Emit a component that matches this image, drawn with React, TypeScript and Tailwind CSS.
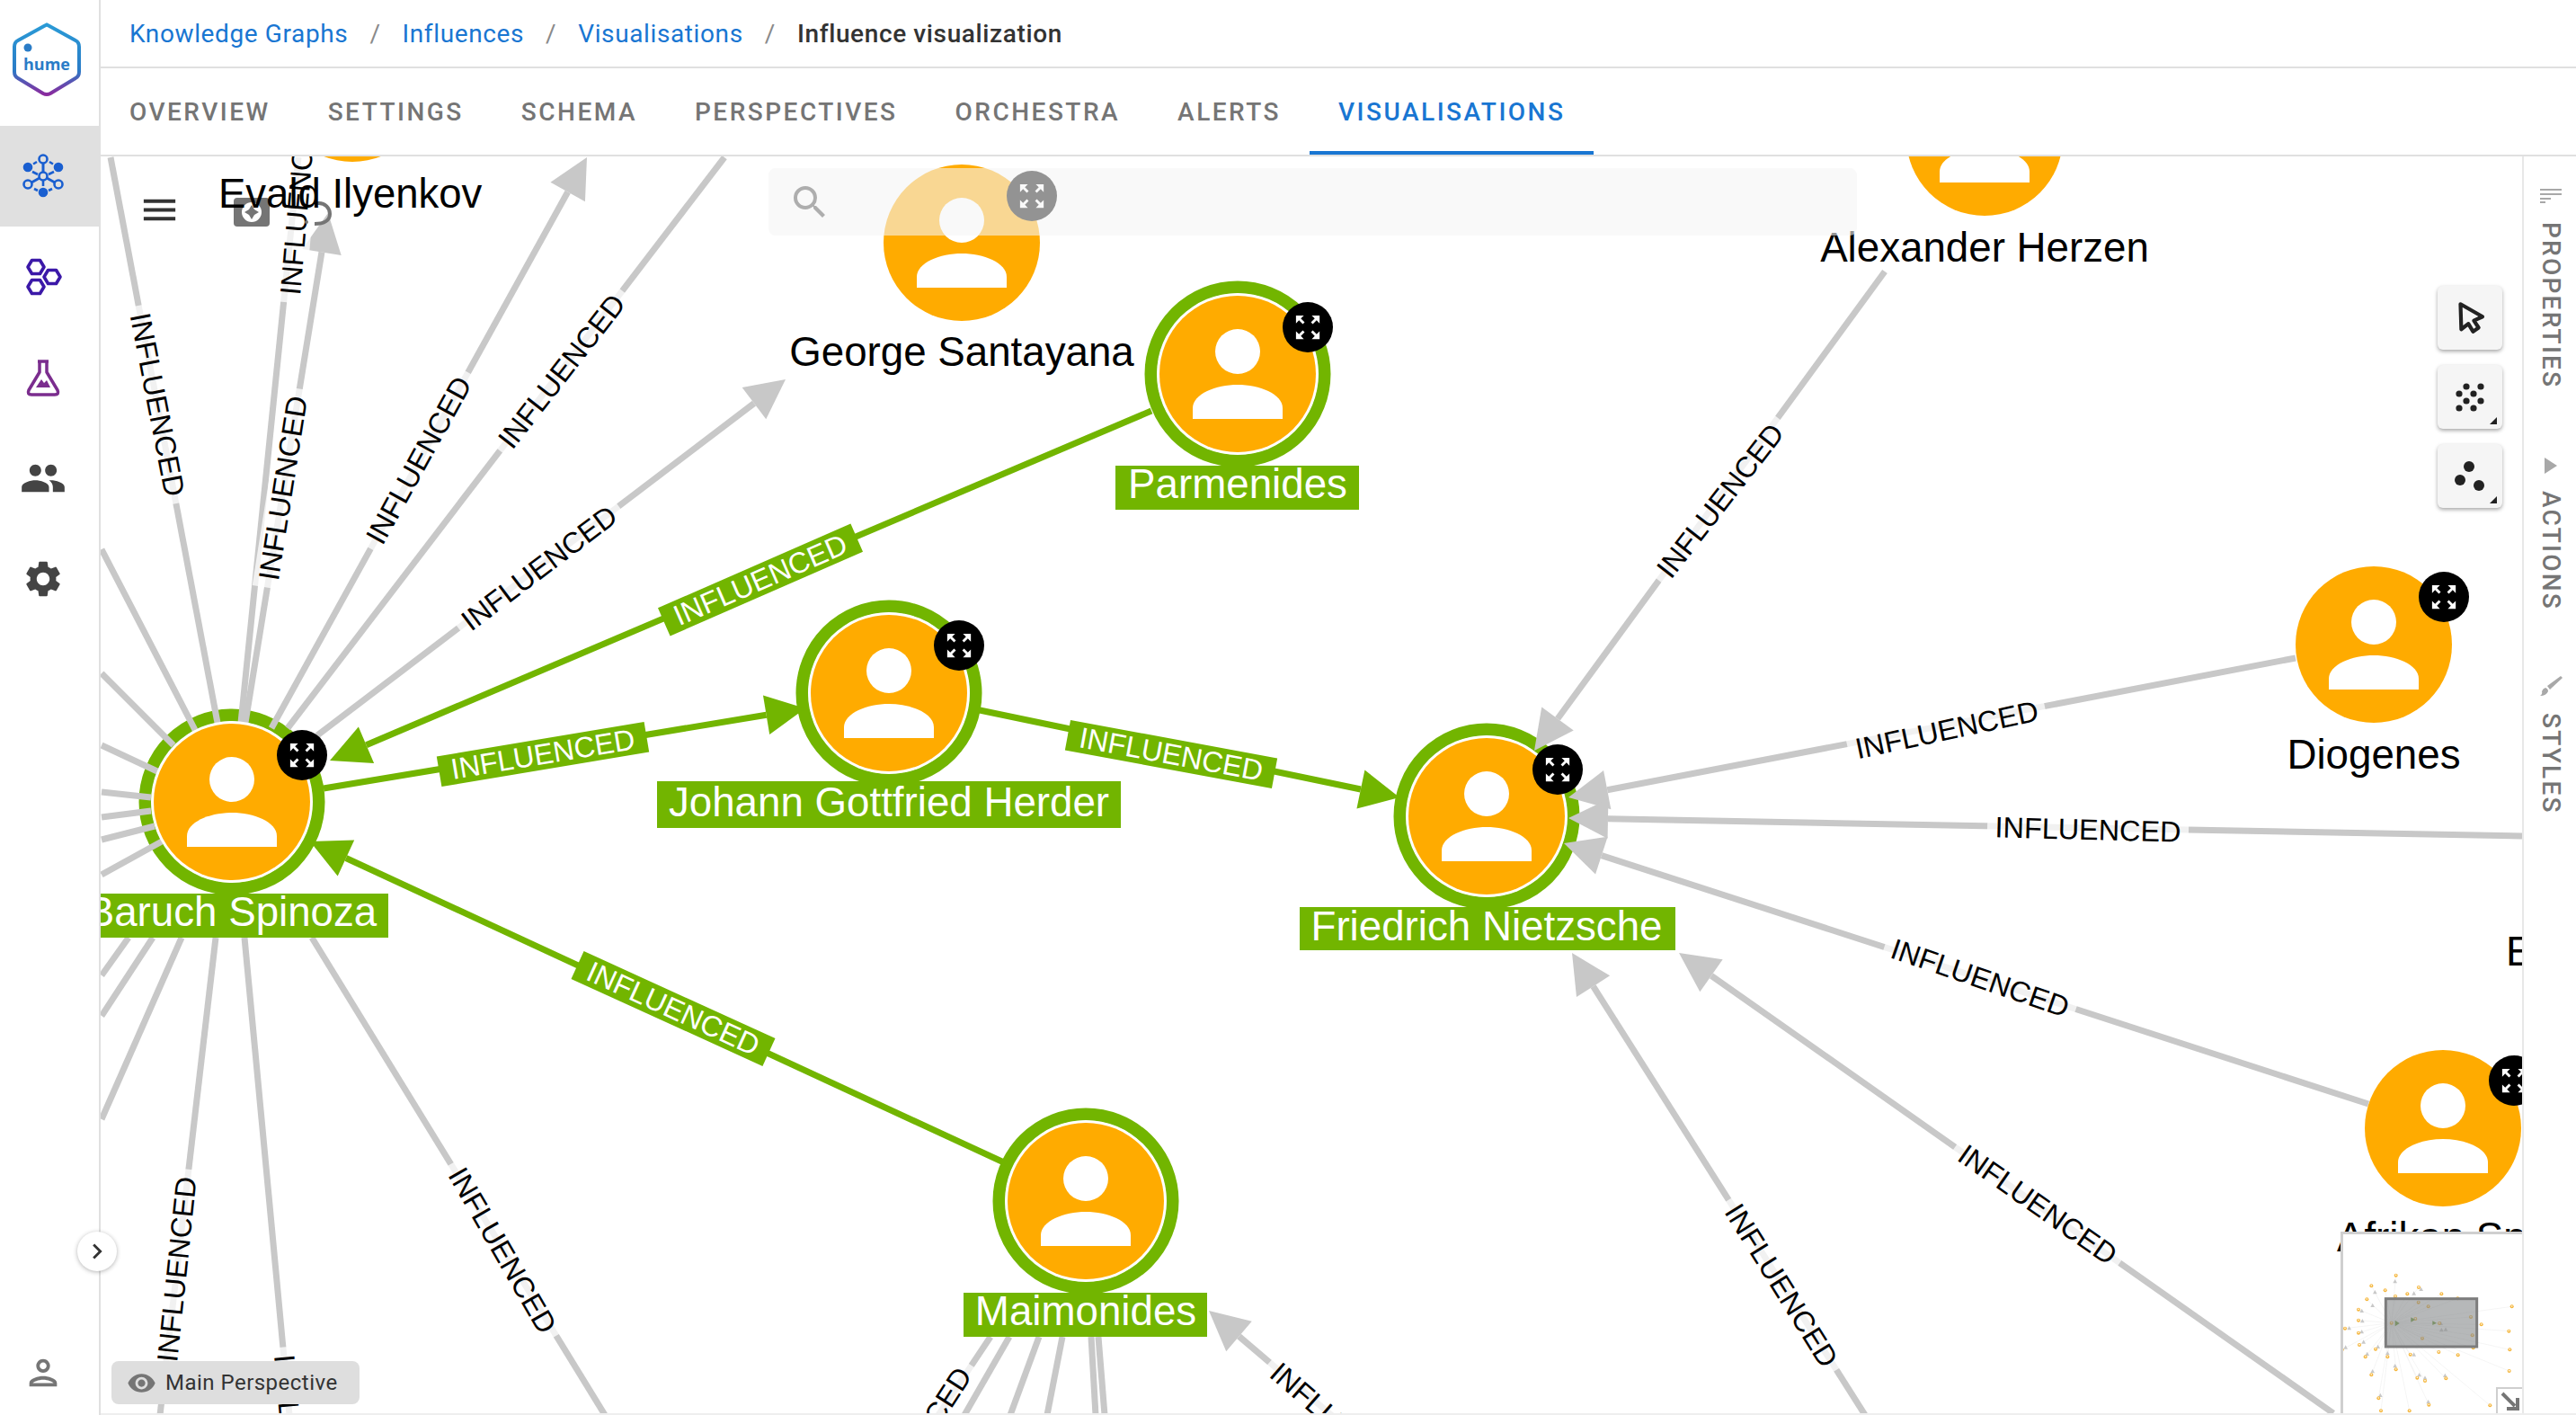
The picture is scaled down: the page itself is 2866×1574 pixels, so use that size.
import { MdChevronRight, MdMenu, MdOutlinePerson, MdPeople, MdSearch, MdSettings, MdVisibility } from 'react-icons/md';

const GRAY = '#c8c8c8';
const GREEN = '#72b500';
const ORANGE = '#ffab00';
const EXPAND =
    'M15 3l2.3 2.3-2.89 2.87 1.42 1.42L18.7 6.7 21 9V3h-6zM3 9l2.3-2.3 2.87 2.89 1.42-1.42L6.7 5.3 9 3H3v6zm6 12l-2.3-2.3 2.89-2.87-1.42-1.42L5.3 17.3 3 15v6h6zm12-6l-2.3 2.3-2.87-2.89-1.42 1.42 2.89 2.87L15 21h6v-6z';

type Line = [number, number, number, number];

// plain spokes, no arrow head
const spokes: Line[] = [
    [123, 175, 242, 804],
    [332, 175, 268, 804],
    [320, 810, 806, 175],
    [113, 611, 217, 812],
    [113, 749, 193, 829],
    [113, 829, 175, 858],
    [113, 881, 168, 887],
    [113, 909, 168, 902],
    [113, 934, 172, 919],
    [113, 973, 180, 936],
    [143, 1043, 113, 1085],
    [170, 1043, 113, 1130],
    [202, 1043, 113, 1245],
    [240, 1043, 178, 1574],
    [272, 1043, 322, 1574],
    [347, 1043, 673, 1574],
    [1102, 1487, 1000, 1640],
    [1123, 1487, 1073, 1574],
    [1156, 1487, 1124, 1574],
    [1182, 1487, 1165, 1574],
    [1214, 1487, 1219, 1574],
    [1222, 1487, 1229, 1574],
];

// last point is the tip of the arrow
const arrows: Line[] = [
    [273, 804, 365, 237],
    [302, 810, 653, 175],
    [353, 818, 874, 422],
    [2097, 302, 1707, 835],
    [2554, 732, 1745, 887],
    [2806, 930, 1745, 910],
    [2635, 1228, 1740, 938],
    [2596, 1572, 1868, 1060],
    [2075, 1574, 1749, 1060],
    [1500, 1590, 1345, 1458],
];

const greenArrows: Line[] = [
    [1281, 457, 367, 846],
    [360, 877, 896, 788],
    [1090, 790, 1557, 887],
    [1119, 1294, 345, 936],
];

const edgeLabels = [
    [175, 450, 79],
    [315, 543, -81],
    [332, 225, -85],
    [466, 512, -61],
    [625, 413, -52],
    [600, 632, -37],
    [197, 1412, -84],
    [325, 1610, 85],
    [559, 1391, 60],
    [1017, 1611, -57],
    [1496, 1590, 41],
    [1914, 557, -52],
    [2166, 812, -12],
    [2323, 923, 1.5],
    [2203, 1088, 19],
    [2267, 1340, 35],
    [1982, 1430, 58],
];

const greenLabels = [
    [846, 645, -23.6],
    [604, 839, -9.5],
    [1303, 839, 10.5],
    [749, 1122, 24.5],
];

type GraphNode = {
    x: number;
    y: number;
    name: string;
    picked?: boolean;
    badge?: [number, number];
    labelY?: number;
    box?: [number, number, number, number];
};

const nodes: GraphNode[] = [
    { x: 392, y: 93, name: '' },
    { x: 1070, y: 270, name: 'George Santayana', badge: [1148, 218], labelY: 407 },
    { x: 2208, y: 153, name: 'Alexander Herzen', labelY: 291 },
    { x: 2641, y: 717, name: 'Diogenes', badge: [2719, 664], labelY: 855 },
    { x: 2718, y: 1255, name: 'Afrikan Spir', badge: [2797, 1202], labelY: 1392 },
    { x: 258, y: 892, name: 'Baruch Spinoza', picked: true, badge: [336, 840], labelY: 1030, box: [111, 994, 321, 49] },
    { x: 1377, y: 416, name: 'Parmenides', picked: true, badge: [1455, 364], labelY: 554, box: [1241, 518, 271, 49] },
    { x: 989, y: 771, name: 'Johann Gottfried Herder', picked: true, badge: [1067, 718], labelY: 908, box: [731, 869, 516, 52] },
    { x: 1654, y: 908, name: 'Friedrich Nietzsche', picked: true, badge: [1733, 856], labelY: 1046, box: [1446, 1009, 418, 48] },
    { x: 1208, y: 1336, name: 'Maimonides', picked: true, labelY: 1474, box: [1072, 1438, 271, 49] },
];

const miniDots = [
    [500, 808], [418, 843], [464, 858], [403, 888], [375, 922], [375, 958], [330, 985], [375, 1000], [320, 1056],
    [378, 1040], [398, 1080], [432, 1054], [472, 1080], [418, 1140], [500, 1122], [442, 1218], [450, 1260], [545, 1260],
    [610, 1240], [571, 1150], [597, 1160], [667, 1152], [548, 1072], [643, 1064], [707, 1074], [758, 1050], [785, 972],
    [887, 912], [877, 994], [880, 1056], [878, 1127], [814, 1242], [652, 870], [576, 848], [538, 870], [498, 878],
    [706, 885], [575, 898], [608, 912], [750, 947], [565, 953], [485, 967], [645, 968], [755, 1008], [588, 1018],
];

const miniArrows = [
    [497, 828], [430, 864], [422, 908], [386, 926], [388, 960], [344, 984], [386, 996], [332, 1048], [392, 1030],
    [404, 1070], [440, 1046], [472, 1068], [422, 1128], [497, 1110], [448, 1208], [608, 1230], [578, 1140], [597, 1150],
    [664, 1142], [560, 1072], [584, 854], [560, 868], [650, 968], [652, 990], [666, 988],
];

function Arrow({ line, color }: { line: Line; color: string }) {
    const [x1, y1, x2, y2] = line;
    const len = Math.hypot(x2 - x1, y2 - y1);
    const ux = (x2 - x1) / len;
    const uy = (y2 - y1) / len;
    const bx = x2 - ux * 44;
    const by = y2 - uy * 44;
    const points = `${x2},${y2} ${bx - uy * 22},${by + ux * 22} ${bx + uy * 22},${by - ux * 22}`;
    return (
        <g>
            <line x1={x1} y1={y1} x2={bx} y2={by} stroke={color} strokeWidth={7} />
            <polygon points={points} fill={color} />
        </g>
    );
}

function EdgeLabel({ x, y, r, picked }: { x: number; y: number; r: number; picked?: boolean }) {
    return (
        <g transform={`translate(${x} ${y}) rotate(${r})`}>
            {picked ? (
                <rect x={-117} y={-17} width={234} height={34} fill={GREEN} />
            ) : (
                <rect x={-112} y={-17} width={224} height={34} fill="#fff" fillOpacity={0.75} />
            )}
            <text textAnchor="middle" dominantBaseline="central" fontSize={32.4} fill={picked ? '#fff' : '#000'}>
                INFLUENCED
            </text>
        </g>
    );
}

function Badge({ x, y }: { x: number; y: number }) {
    return (
        <g>
            <circle cx={x} cy={y} r={28} fill="#000" />
            <path d={EXPAND} fill="#fff" transform={`translate(${x - 17.5} ${y - 17.5}) scale(1.46)`} />
        </g>
    );
}

function PersonNode({ node }: { node: GraphNode }) {
    const { x, y } = node;
    return (
        <g>
            {node.picked && <circle cx={x} cy={y} r={90} fill="#fff" />}
            <circle cx={x} cy={y} r={87} fill={ORANGE} />
            <circle cx={x} cy={y - 25} r={25} fill="#fff" />
            <path
                d={`M${x - 50} ${y + 50} V${y + 38} C${x - 50} ${y + 22} ${x - 24} ${y + 12} ${x} ${y + 12} C${x + 24} ${y + 12} ${x + 50} ${y + 22} ${x + 50} ${y + 38} V${y + 50} Z`}
                fill="#fff"
            />
            {node.badge && <Badge x={node.badge[0]} y={node.badge[1]} />}
        </g>
    );
}

function Graph() {
    return (
        <svg
            className="absolute top-0 left-0 font-['Liberation_Sans',sans-serif]"
            width={2694}
            height={1398}
            viewBox="112 174 2694 1398"
        >
            {nodes
                .filter((n) => n.picked)
                .map((n) => (
                    <circle key={n.name} cx={n.x} cy={n.y} r={96.5} fill="none" stroke={GREEN} strokeWidth={14} />
                ))}
            {spokes.map((l, i) => (
                <line key={i} x1={l[0]} y1={l[1]} x2={l[2]} y2={l[3]} stroke={GRAY} strokeWidth={7} />
            ))}
            {arrows.map((l, i) => (
                <Arrow key={i} line={l} color={GRAY} />
            ))}
            {greenArrows.map((l, i) => (
                <Arrow key={i} line={l} color={GREEN} />
            ))}
            {nodes.map((n, i) => (
                <PersonNode key={i} node={n} />
            ))}
            {edgeLabels.map((l, i) => (
                <EdgeLabel key={i} x={l[0]} y={l[1]} r={l[2]} />
            ))}
            {greenLabels.map((l, i) => (
                <EdgeLabel key={i} x={l[0]} y={l[1]} r={l[2]} picked />
            ))}
            {nodes.map((n, i) =>
                n.box ? <rect key={i} x={n.box[0]} y={n.box[1]} width={n.box[2]} height={n.box[3]} fill={GREEN} /> : null,
            )}
            {nodes.map((n, i) =>
                n.name ? (
                    <text key={i} x={n.x} y={n.labelY} textAnchor="middle" fontSize={45.7} fill={n.picked ? '#fff' : '#000'}>
                        {n.name}
                    </text>
                ) : null,
            )}
            <text x={2788} y={1074} fontSize={45.7} fill="#000">
                E
            </text>

            {/* half hidden controls under the node name */}
            <rect x={260} y={220} width={40} height={32} rx={4} fill="#757575" />
            <circle cx={280} cy={236} r={11} fill="#fff" />
            <path d="M280 228 L283 233 L288 236 L283 239 L280 244 L277 239 L272 236 L277 233 Z" fill="#757575" />
            <path d="M353 226 C362 225 367 232 367 238 C367 245 361 249 350 249" fill="none" stroke="#757575" strokeWidth={4} />
            <circle cx={341} cy={247} r={2} fill="#757575" />
            <text x={243} y={231} fontSize={45.5} fill="#000">
                Evald Ilyenkov
            </text>
        </svg>
    );
}

function Minimap() {
    return (
        <div className="absolute right-0 bottom-0 h-[202px] w-[202px] overflow-hidden border-t-[3px] border-l-[3px] border-[#cfcfcf] bg-white">
            <svg className="h-full w-full" viewBox="324 671 597 597">
                {miniDots.map((d, i) => (
                    <line key={i} x1={485} y1={967} x2={d[0]} y2={d[1]} stroke="#f0f0f0" strokeWidth={2} />
                ))}
                {miniArrows.map((d, i) => (
                    <polygon key={i} points={`${d[0]},${d[1] - 7} ${d[0] + 7},${d[1] + 6} ${d[0] - 7},${d[1] + 6}`} fill="#c8c8c8" />
                ))}
                {miniDots.map((d, i) => (
                    <g key={i}>
                        <circle cx={d[0]} cy={d[1]} r={6} fill="#f5b63c" />
                        <circle cx={d[0]} cy={d[1] - 1} r={2.5} fill="#fff" />
                    </g>
                ))}
                <polygon points="497,958 497,978 512,968" fill="#6f9e3a" />
                <polygon points="550,948 550,964 564,956" fill="#6f9e3a" />
                <polygon points="622,960 622,974 636,967" fill="#6f9e3a" />
                <rect x={466} y={886} width={304} height={160} fill="#85888b" fillOpacity={0.6} stroke="#7d7d7d" strokeWidth={9} />
            </svg>
            <div className="absolute right-0 bottom-0 flex h-[29px] w-[29px] items-center justify-center border-t-2 border-l-2 border-[#cfcfcf] bg-white">
                <svg width="24" height="24" viewBox="0 0 24 24">
                    <path d="M3 3 L17 17 M20 8 V20 H8" fill="none" stroke="#757575" strokeWidth={4} />
                </svg>
            </div>
        </div>
    );
}

function ToolButton({ children, corner }: { children: React.ReactNode; corner?: boolean }) {
    return (
        <div className="relative flex h-[71px] w-[72px] items-center justify-center rounded-md bg-[#f5f5f5] shadow-[0_2px_4px_rgba(0,0,0,0.35)]">
            {children}
            {corner && (
                <svg className="absolute right-[6px] bottom-[5px]" width="8" height="8" viewBox="0 0 8 8">
                    <polygon points="8,0 8,8 0,8" fill="#222" />
                </svg>
            )}
        </div>
    );
}

function Canvas() {
    return (
        <div className="relative min-w-0 flex-1 overflow-hidden bg-white">
            <Graph />
            <MdMenu className="absolute top-[36px] left-[42px] text-[#333]" size={47} />
            <div className="absolute top-[13px] left-[743px] flex h-[75px] w-[1211px] items-center rounded-lg bg-[rgba(245,245,245,0.6)] pl-[22px]">
                <MdSearch className="text-[#aeaeae]" size={48} />
            </div>
            <div className="absolute top-[144px] right-[22px] flex flex-col gap-[17px]">
                <ToolButton>
                    <svg width="42" height="42" viewBox="0 0 24 24">
                        <path d="M6 3 L20 11 L14.5 13.5 L17.5 18 L14 20.5 L11 15.5 L6.5 19 Z" fill="none" stroke="#222" strokeWidth={2.4} strokeLinejoin="round" />
                    </svg>
                </ToolButton>
                <ToolButton corner>
                    <svg width="32" height="32" viewBox="-4 -4 32 32" fill="#222">
                        <circle cx="0" cy="8" r="3.6" />
                        <circle cx="8" cy="0" r="3.6" />
                        <circle cx="24" cy="0" r="3.6" />
                        <circle cx="16" cy="8" r="3.6" />
                        <circle cx="0" cy="24" r="3.6" />
                        <circle cx="8" cy="16" r="3.6" />
                        <circle cx="24" cy="16" r="3.6" />
                        <circle cx="16" cy="24" r="3.6" />
                    </svg>
                </ToolButton>
                <ToolButton corner>
                    <svg width="34" height="34" viewBox="0 0 34 34" fill="#222">
                        <circle cx="16" cy="6" r="6" />
                        <circle cx="6" cy="21" r="6" />
                        <circle cx="27" cy="27" r="6" />
                    </svg>
                </ToolButton>
            </div>
            <div className="absolute top-[1340px] left-[12px] flex h-[48px] w-[276px] items-center gap-[10px] rounded-lg bg-[#dedede] pl-[17px] text-[24px] tracking-[0.02em] text-[#333]">
                <MdVisibility className="text-[#757575]" size={33} />
                <span>Main Perspective</span>
            </div>
            <Minimap />
        </div>
    );
}

function Logo() {
    return (
        <svg width="112" height="140" viewBox="0 0 112 140">
            <defs>
                <linearGradient id="hume" x1="0" y1="0" x2="0" y2="1">
                    <stop offset="0" stopColor="#2a9ad6" />
                    <stop offset="0.65" stopColor="#2a7cc7" />
                    <stop offset="1" stopColor="#8a2a9e" />
                </linearGradient>
            </defs>
            <path
                d="M52 27.5 Q52 27.5 49 29 L20 45 Q16 47 16 52 V80 Q16 85 20 87 L48 104 Q52 106 56 104 L84 87 Q88 85 88 80 V52 Q88 47 84 45 L55 29 Q52 27.5 52 27.5 Z"
                fill="none"
                stroke="url(#hume)"
                strokeWidth={4}
            />
            <circle cx="31" cy="53" r="4.5" fill="#2a7cc7" />
            <text x="52" y="78" textAnchor="middle" fontSize="18" fontWeight="700" fill="#2a7cc7" fontFamily="Open Sans, sans-serif">
                hume
            </text>
        </svg>
    );
}

function GraphIcon() {
    return (
        <svg width="50" height="56" viewBox="23 169 50 56" fill="none" stroke="#1a5fd0" strokeWidth={2.6}>
            <path d="M48 192 V183 M44 199 L35 204 M52 199 L61 204" strokeWidth={3} />
            <path d="M41 181 L37 183.5 M55 181 L59 183.5 M36 192 L42 195 M60 192 L54 195 M48 202 V208 M38 211 L42 213 M58 211 L54 213" strokeWidth={2.6} />
            <circle cx="48" cy="197" r="4.5" />
            <circle cx="48" cy="178" r="4.5" />
            <circle cx="31" cy="206" r="4.5" />
            <circle cx="65" cy="206" r="4.5" />
            <circle cx="31" cy="187" r="4" fill="#1a5fd0" />
            <circle cx="65" cy="187" r="4" fill="#1a5fd0" />
            <circle cx="48" cy="215" r="4" fill="#1a5fd0" />
        </svg>
    );
}

function HexIcon() {
    const hex = (x: number, y: number) => `${x - 9},${y} ${x - 4.5},${y - 7.5} ${x + 4.5},${y - 7.5} ${x + 9},${y} ${x + 4.5},${y + 7.5} ${x - 4.5},${y + 7.5}`;
    return (
        <svg width="44" height="48" viewBox="27 284 44 48" fill="none" stroke="#3b18a8" strokeWidth={3.6} strokeLinejoin="round">
            <polygon points={hex(40, 297)} />
            <polygon points={hex(58, 308)} />
            <polygon points={hex(40, 319)} />
        </svg>
    );
}

function FlaskIcon() {
    return (
        <svg width="40" height="44" viewBox="0 0 40 44" fill="none" stroke="#7b2d8e" strokeWidth={3.5} strokeLinejoin="round">
            <path d="M14 4 H26 M16 4 V16 L4 36 Q2 41 7 41 H33 Q38 41 36 36 L24 16 V4" />
            <path d="M12 33 L18 24 L21 28 L24 25 L28 33 Z" fill="#7b2d8e" stroke="none" />
        </svg>
    );
}

function Sidebar() {
    return (
        <aside className="flex h-full w-[112px] shrink-0 flex-col border-r-2 border-[#e0e0e0] bg-white">
            <Logo />
            <div className="flex h-[112px] items-center bg-[#e0e0e0] pl-[23px]">
                <GraphIcon />
            </div>
            <div className="flex h-[112px] items-center pl-[27px]">
                <HexIcon />
            </div>
            <div className="flex h-[112px] items-center pl-[28px]">
                <FlaskIcon />
            </div>
            <div className="flex h-[112px] items-center pl-[22px]">
                <MdPeople className="text-[#444]" size={52} />
            </div>
            <div className="flex h-[112px] items-center pl-[24px]">
                <MdSettings className="text-[#444]" size={48} />
            </div>
            <div className="mt-auto flex h-[94px] items-center pl-[25px]">
                <MdOutlinePerson className="text-[#757575]" size={46} />
            </div>
        </aside>
    );
}

function Breadcrumbs() {
    const links = ['Knowledge Graphs', 'Influences', 'Visualisations'];
    return (
        <div className="flex h-[76px] items-center border-b-2 border-[#e0e0e0] pt-[2px] pl-8 text-[28px] tracking-[0.022em]">
            {links.map((link) => (
                <div key={link} className="flex items-center">
                    <span className="text-[#1976d2]">{link}</span>
                    <span className="mx-[24px] text-[#8a8a8a]">/</span>
                </div>
            ))}
            <span className="font-medium text-[#333]">Influence visualization</span>
        </div>
    );
}

function Tabs() {
    const tabs = ['Overview', 'Settings', 'Schema', 'Perspectives', 'Orchestra', 'Alerts'];
    return (
        <div className="flex h-[98px] border-b-2 border-[#e0e0e0] text-[28px] font-medium tracking-[0.089em] uppercase">
            {tabs.map((tab) => (
                <div key={tab} className="flex items-center px-8 pt-[2px] text-[#757575]">
                    {tab}
                </div>
            ))}
            <div className="flex items-center border-b-4 border-[#1976d2] px-8 pt-[6px] text-[#1976d2]">Visualisations</div>
        </div>
    );
}

function RightRail() {
    return (
        <aside className="flex w-[60px] shrink-0 flex-col items-center border-l-2 border-[#e8e8e8] bg-white pt-9 pl-[2px] text-[28px] font-medium tracking-[0.08em] text-[#757575]">
            <svg width="24" height="16" viewBox="0 0 24 16" stroke="#a8a8a8" strokeWidth={2}>
                <path d="M0 1 H24 M0 6 H24 M0 11 H12 M0 15 H6" />
            </svg>
            <span className="mt-[21px] leading-none [writing-mode:vertical-rl]">PROPERTIES</span>
            <svg className="mt-[77px]" width="14" height="18" viewBox="0 0 14 18" fill="#a8a8a8">
                <polygon points="0,0 14,9 0,18" />
            </svg>
            <span className="mt-[19px] leading-none [writing-mode:vertical-rl]">ACTIONS</span>
            <svg className="mt-[72px]" width="26" height="24" viewBox="0 0 26 24" fill="#a8a8a8">
                <path d="M24 1 L9 12 L12 16 L26 3 Z" />
                <path d="M7 14 Q10 15 10 18 Q8 23 1 23 Q4 21 3 18 Q4 15 7 14 Z" />
            </svg>
            <span className="mt-[18px] leading-none [writing-mode:vertical-rl]">STYLES</span>
        </aside>
    );
}

export default function App() {
    return (
        <div className="relative flex h-[1574px] w-[2866px] overflow-hidden bg-white font-['Roboto',sans-serif]">
            <Sidebar />
            <main className="flex h-full min-w-0 flex-1 flex-col">
                <Breadcrumbs />
                <Tabs />
                <div className="flex min-h-0 flex-1 border-b-2 border-[#eeeeee]">
                    <Canvas />
                    <RightRail />
                </div>
            </main>
            <button className="absolute top-[1370px] left-[86px] flex h-[44px] w-[44px] items-center justify-center rounded-full bg-white shadow-[0_1px_5px_rgba(0,0,0,0.3)]">
                <MdChevronRight className="text-[#333]" size={34} />
            </button>
        </div>
    );
}
